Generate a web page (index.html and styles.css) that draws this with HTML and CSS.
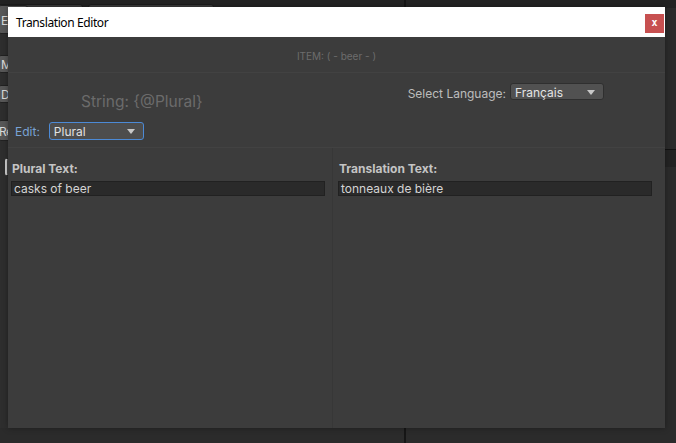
FILE: index.html
```html
<!DOCTYPE html>
<html>
<head>
<meta charset="utf-8">
<link rel="stylesheet" href="styles.css">
</head>
<body>
<div class="desk">
  <div class="topstrip">
    <div class="tbtn tbtn1"></div>
    <div class="tbtn tbtn2"></div>
  </div>
  <div class="vline vline-top"></div>
  <div class="leftstrip">
    <div class="lbtn lb-e">E</div>
    <div class="lbtn lb-m">M</div>
    <div class="lbtn lb-d">D</div>
    <div class="lbtn lb-r">Re</div>
    <div class="lbtn lb-i"></div>
  </div>
  <div class="rightband"></div>
  <div class="vline vline-bottom"></div>

  <div class="window">
    <div class="titlebar">
      <span class="title">Translation Editor</span>
      <div class="close">x</div>
    </div>
    <div class="item">ITEM: ( - beer - )</div>
    <div class="top">
      <div class="top-left">
        <div class="string-label">String: {@Plural}</div>
        <div class="edit-row">
          <span class="edit-label">Edit:</span>
          <div class="dropdown dd-edit"><span>Plural</span><i class="arrow"></i></div>
        </div>
      </div>
      <div class="top-right">
        <span class="lang-label">Select Language:</span>
        <div class="dropdown dd-lang"><span>Français</span><i class="arrow"></i></div>
      </div>
    </div>
    <div class="columns">
      <div class="col col-left">
        <div class="col-label">Plural Text:</div>
        <div class="field">casks of beer</div>
      </div>
      <div class="col col-right">
        <div class="col-label">Translation Text:</div>
        <div class="field">tonneaux de bière</div>
      </div>
    </div>
  </div>
</div>
</body>
</html>
```

FILE: styles.css
```css
html, body {
  margin: 0;
  padding: 0;
}
body {
  width: 676px;
  height: 443px;
  overflow: hidden;
  background: #2b2b2b;
  font-family: Inter, "Noto Sans", sans-serif;
}
.desk {
  position: relative;
  width: 676px;
  height: 443px;
}
.topstrip {
  position: absolute;
  left: 0; top: 0;
  width: 676px; height: 8px;
  background: #232323;
}
.tbtn {
  position: absolute;
  top: 4px;
  height: 8px;
  background: #3a3a3a;
  border: 1px solid #1c1c1c;
  border-radius: 3px;
}
.tbtn1 { left: -4px; width: 85px; }
.tbtn2 { left: 88px; width: 124px; }
.vline {
  position: absolute;
  width: 2px;
  background: #161616;
}
.vline-top { left: 404px; top: 0; height: 8px; }
.vline-bottom { left: 404px; top: 428px; height: 15px; }
.leftstrip {
  position: absolute;
  left: 0; top: 8px;
  width: 8px; height: 420px;
  background: #2e2e2e;
}
.lbtn {
  position: absolute;
  left: -2px;
  width: 30px;
  background: #585858;
  border: 1px solid #222;
  border-radius: 3px;
  color: #dcdcdc;
  font-size: 12px;
  line-height: 17px;
  padding-left: 2px;
  box-sizing: border-box;
  letter-spacing: -0.5px;
}
.lb-e { top: -3px; height: 29px; line-height: 29px; }
.lb-m { top: 47px; height: 18px; }
.lb-d { top: 77px; height: 18px; }
.lb-r { top: 112px; height: 21px; line-height: 21px; padding-left: 0; }
.lb-i { top: 150px; height: 18px; background: #4a4a4a; border-left: 2px solid #d0d0d0; left: 5px; }
.rightband {
  position: absolute;
  left: 665px; top: 149px;
  width: 11px; height: 17px;
  background: #232323;
  border-top: 1px solid #121212;
}
.window {
  position: absolute;
  left: 8px; top: 7px;
  width: 657px; height: 421px;
  background: #3c3c3c;
  display: flex;
  flex-direction: column;
  box-shadow: 0 0 6px rgba(0,0,0,0.35);
}
.titlebar {
  height: 30px;
  flex: none;
  background: #ffffff;
  display: flex;
  align-items: center;
  justify-content: space-between;
}
.title {
  font-family: "Noto Sans", sans-serif;
  font-size: 12px;
  color: #000;
  padding-left: 8px;
  letter-spacing: -0.4px;
}
.close {
  align-self: flex-start;
  margin-top: 7px;
  margin-right: 1px;
  width: 19px;
  height: 19px;
  background: #c75050;
  color: #fff;
  font-family: "DejaVu Sans Mono", monospace;
  font-weight: bold;
  font-size: 10px;
  line-height: 18px;
  text-align: center;
}
.item {
  height: 36px;
  flex: none;
  box-sizing: border-box;
  border-bottom: 1px solid #424242;
  text-align: center;
  color: #6c6c6c;
  font-size: 10px;
  line-height: 38px;
}
.top {
  height: 75px;
  flex: none;
  box-sizing: border-box;
  border-bottom: 1px solid #424242;
  display: flex;
  justify-content: space-between;
}
.top-left {
  padding-top: 19px;
  padding-left: 7px;
}
.string-label {
  margin-left: 66px;
  color: #6b6b6b;
  font-size: 15.5px;
  line-height: 19px;
}
.edit-row {
  margin-top: 10px;
  display: flex;
  align-items: center;
  gap: 9px;
}
.edit-label {
  color: #79a3d6;
  font-size: 12px;
  line-height: 18px;
  padding-top: 2px;
}
.dropdown {
  box-sizing: border-box;
  display: flex;
  align-items: center;
  justify-content: space-between;
  border-radius: 3px;
  font-size: 12px;
  color: #e2e2e2;
  padding: 1px 8px 0 4px;
}
.dd-edit {
  width: 95px;
  height: 18px;
  background: #4d4d4d;
  border: 1px solid #4c8ad6;
}
.top-right {
  padding-top: 10px;
  padding-right: 61px;
  display: flex;
  align-items: flex-start;
  gap: 4px;
}
.lang-label {
  color: #bdbdbd;
  font-size: 12px;
  line-height: 17px;
  padding-top: 2px;
}
.dd-lang {
  width: 94px;
  height: 17px;
  background: #515151;
  border: 1px solid #2f2f2f;
  color: #e4e4e4;
  padding-top: 1px;
}
.arrow {
  width: 0;
  height: 0;
  border-left: 4px solid transparent;
  border-right: 4px solid transparent;
  border-top: 5px solid #c8c8c8;
}
.columns {
  flex: 1;
  display: flex;
}
.col {
  box-sizing: border-box;
  padding-top: 14px;
}
.col-left {
  width: 325px;
  border-right: 1px solid #373737;
  padding-left: 3px;
}
.col-right {
  flex: 1;
  padding-left: 5px;
}
.col-label {
  color: #c4c4c4;
  font-weight: bold;
  font-size: 12px;
  line-height: 14px;
  padding-left: 1px;
}
.field {
  margin-top: 5px;
  width: 314px;
  height: 15px;
  box-sizing: border-box;
  background: #2a2a2a;
  border: 1px solid #212121;
  color: #d4d4d4;
  font-size: 12px;
  line-height: 13px;
  padding-left: 2px;
}
```
